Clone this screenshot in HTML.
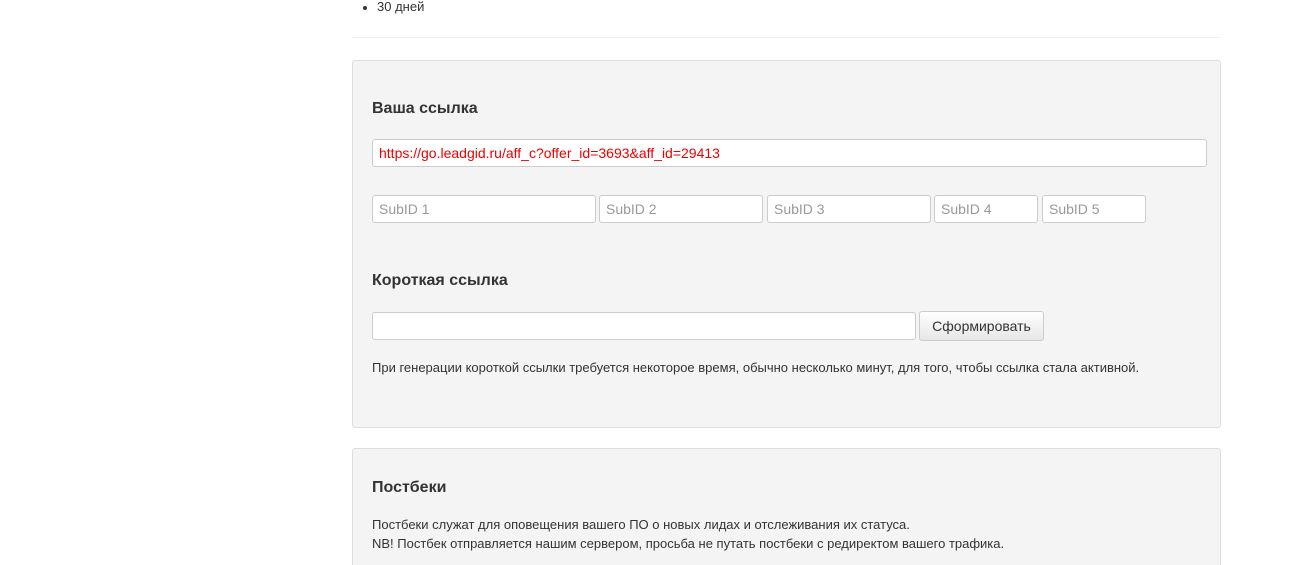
<!DOCTYPE html>
<html><head><meta charset="utf-8"><style>
html,body{margin:0;width:1310px;height:565px;overflow:hidden}
body{background:#fff;font-family:"Liberation Sans",Arial,sans-serif;color:#333;position:relative}
.a{position:absolute}
.p{position:absolute;left:352px;width:867px;background:#f4f4f4;border:1px solid #ddd;border-radius:3px}
h3{position:absolute;margin:0;font-size:16px;font-weight:bold;color:#333}
.in{position:absolute;height:26px;border:1px solid #ccc;border-radius:3px;background:#fff;box-sizing:border-box;font-size:14px;line-height:24px;padding-left:6px;color:#999}
.t{position:absolute;font-size:13px;white-space:nowrap;color:#333}
</style></head><body>
<div class="a" style="left:363px;top:6px;width:4px;height:4px;border-radius:50%;background:#333"></div>
<div class="t" style="left:377px;top:-1px;">30 дней</div>
<div class="a" style="left:352px;top:37px;width:868px;height:1px;background:#eee"></div>
<div class="p" style="top:60px;height:366px"></div>
<h3 style="left:372px;top:100px">Ваша ссылка</h3>
<div class="in" style="left:372px;top:139px;width:835px;height:28px;color:#e00;line-height:26px">https://go.leadgid.ru/aff_c?offer_id=3693&amp;aff_id=29413</div>
<div class="in" style="left:372px;top:195px;width:224px;height:28px;line-height:26px">SubID 1</div>
<div class="in" style="left:599px;top:195px;width:164px;height:28px;line-height:26px">SubID 2</div>
<div class="in" style="left:767px;top:195px;width:164px;height:28px;line-height:26px">SubID 3</div>
<div class="in" style="left:934px;top:195px;width:104px;height:28px;line-height:26px">SubID 4</div>
<div class="in" style="left:1042px;top:195px;width:104px;height:28px;line-height:26px">SubID 5</div>
<h3 style="left:372px;top:272px">Короткая ссылка</h3>
<div class="in" style="left:372px;top:312px;width:544px;height:28px"></div>
<div class="a" style="left:919px;top:311px;width:125px;height:30px;box-sizing:border-box;border:1px solid #ccc;border-radius:3px;background:linear-gradient(#fff,#e6e6e6);font-size:14px;line-height:28px;text-align:center;color:#333">Сформировать</div>
<div class="t" style="left:372px;top:360px">При генерации короткой ссылки требуется некоторое время, обычно несколько минут, для того, чтобы ссылка стала активной.</div>
<div class="p" style="top:448px;height:117px;border-bottom:none;border-radius:3px 3px 0 0"></div>
<h3 style="left:372px;top:479px">Постбеки</h3>
<div class="t" style="left:372px;top:517px">Постбеки служат для оповещения вашего ПО о новых лидах и отслеживания их статуса.</div>
<div class="t" style="left:372px;top:536px">NB! Постбек отправляется нашим сервером, просьба не путать постбеки с редиректом вашего трафика.</div>
</body></html>
